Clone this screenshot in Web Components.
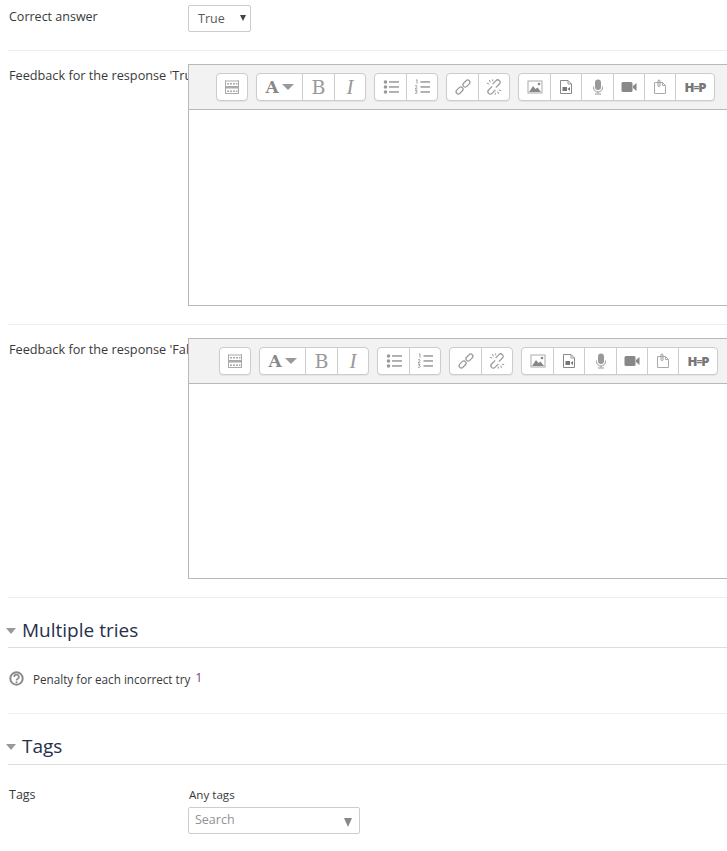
<!DOCTYPE html>
<html lang="en">
<head>
<meta charset="utf-8">
<title>Question form</title>
<style>
  html, body { margin: 0; padding: 0; background: #fff; overflow: hidden; }
  body { width: 727px; height: 851px; font: 12.5px/20px "Open Sans", sans-serif; color: #373a3c; }
</style>
</head>
<body>
<form-page>
  <form-row height="51" kind="short">
    <span slot="label">Correct answer</span>
    <true-select></true-select>
  </form-row>
  <form-row height="274">
    <span slot="label" style="font-size:12.7px">Feedback for the response 'True'</span>
    <atto-editor pad="27" box="242"></atto-editor>
  </form-row>
  <form-row height="273">
    <span slot="label" style="font-size:12.7px">Feedback for the response 'False'</span>
    <atto-editor pad="30" box="241"></atto-editor>
  </form-row>
  <section-head style="margin-top:20px;height:29px">Multiple tries</section-head>
  <penalty-row></penalty-row>
  <section-head style="margin-top:20px">Tags</section-head>
  <tag-row></tag-row>
</form-page>

<script>
class FormPage extends HTMLElement {
  constructor() {
    super();
    this.attachShadow({ mode: "open" });
  }
  connectedCallback() {
    this.shadowRoot.innerHTML = `
      <style>
        :host { display: block; padding-left: 8px; }
      </style>
      <slot></slot>
    `;
  }
}
customElements.define("form-page", FormPage);

class FormRow extends HTMLElement {
  constructor() {
    super();
    this.attachShadow({ mode: "open" });
  }
  connectedCallback() {
    const short = this.getAttribute("kind") === "short";
    this.shadowRoot.innerHTML = `
      <style>
        :host { display: block; }
        .row {
          display: flex;
          height: ${this.getAttribute("height")}px;
          box-sizing: border-box;
          border-bottom: 1px solid #eceeef;
          width: 719px;
        }
        .label {
          flex: 0 0 180px;
          padding-left: 1px;
          box-sizing: border-box;
          white-space: nowrap;
          overflow: hidden;
          height: 24px;
          margin-top: ${short ? 7 : 14}px;
        }
        .field { margin-top: ${short ? 5 : 13}px; flex: 1; min-width: 0; }
      </style>
      <div class="row">
        <div class="label"><slot name="label"></slot></div>
        <div class="field"><slot></slot></div>
      </div>
    `;
  }
}
customElements.define("form-row", FormRow);

class TrueSelect extends HTMLElement {
  constructor() {
    super();
    this.attachShadow({ mode: "open" });
  }
  connectedCallback() {
    this.shadowRoot.innerHTML = `
      <style>
        :host { display: block; width: 63px; height: 27px; }
        .box {
          position: relative;
          box-sizing: border-box;
          width: 63px;
          height: 27px;
          border: 1px solid #ccc;
          border-radius: 2px;
          padding: 3px 0 0 9px;
          color: #55595c;
        }
        .box::after {
          content: "";
          position: absolute;
          right: 4px;
          top: 9px;
          border-left: 3.5px solid transparent;
          border-right: 3.5px solid transparent;
          border-top: 6px solid #444;
        }
      </style>
      <div class="box">True</div>
    `;
  }
}
customElements.define("true-select", TrueSelect);

const ICONS = {
  table: `<g fill="#aaa"><rect x="1" y="1.5" width="14" height="1"/><rect x="1" y="7" width="14" height="2.5"/><rect x="1" y="14" width="14" height="1"/><rect x="1" y="1.5" width="1" height="13"/><rect x="14" y="1.5" width="1" height="13"/><rect x="3" y="4" width="2" height="1.5"/><rect x="6" y="4" width="2" height="1.5"/><rect x="9" y="4" width="2" height="1.5"/><rect x="12" y="4" width="1.5" height="1.5"/><rect x="3" y="11.5" width="2" height="1.5"/><rect x="6" y="11.5" width="2" height="1.5"/><rect x="9" y="11.5" width="2" height="1.5"/><rect x="12" y="11.5" width="1.5" height="1.5"/></g>`,
  ul: `<g fill="#999"><circle cx="2.5" cy="3" r="1.8"/><circle cx="2.5" cy="8" r="1.8"/><circle cx="2.5" cy="13" r="1.8"/><rect x="6" y="2.2" width="10" height="1.5"/><rect x="6" y="7.2" width="10" height="1.5"/><rect x="6" y="12.2" width="10" height="1.5"/></g>`,
  ol: `<g fill="#999"><rect x="6.5" y="2.2" width="9.5" height="1.5"/><rect x="6.5" y="7.2" width="9.5" height="1.5"/><rect x="6.5" y="12.2" width="9.5" height="1.5"/></g><g fill="none" stroke="#999" stroke-width=".9"><path d="M2 1.2l1-.5v4"/><path d="M1 6.8q2-1 2 .5 0 1-2 2.5h2.3"/><path d="M1 11.3h2l-1 1.3q1.5 0 1.3 1-.2 1.2-2.3.7"/></g>`,
  link: `<g fill="none" stroke="#999" stroke-width="1.2"><rect x="-4.6" y="-2.2" width="8" height="4.4" rx="2.2" transform="translate(5 11) rotate(-45)"/><rect x="-3.4" y="-2.2" width="8" height="4.4" rx="2.2" transform="translate(11 5) rotate(-45)"/></g>`,
  unlink: `<g fill="none" stroke="#999" stroke-width="1.2"><path d="M6.2 7.4L2.6 11a2.4 2.4 0 0 0 3.4 3.4l3.4-3.6"/><path d="M9.8 8.6l3.6-3.6A2.4 2.4 0 0 0 10 1.6L6.6 5.2"/><path d="M3.4 1l1 2.4M.8 4.2l2.4.8M6.6.4l.2 2M12.6 15l-1-2.4M15.2 11.8l-2.4-.8M9.4 15.6l-.2-2" stroke-width="1"/></g>`,
  image: `<rect x="1" y="2" width="14" height="12" fill="none" stroke="#aaa"/><path fill="#888" d="M2 13l4-6 2.5 3 2-1.5 3.5 4.5z"/><circle cx="12" cy="5" r="1.3" fill="#888"/>`,
  media: `<path fill="none" stroke="#888" d="M2.5 1.5h7.5l3.5 3.5v9.5h-11z"/><path fill="none" stroke="#999" d="M10 1.5V5h3.5"/><rect x="4.5" y="8" width="4.5" height="4" fill="#777"/><path fill="#777" d="M9.5 10l2.5-2v4z"/>`,
  mic: `<rect x="5" y="0.5" width="6" height="10.5" rx="3" fill="#999"/><path fill="none" stroke="#999" d="M3.5 7.5v1a4.5 4.5 0 0 0 9 0v-1M8 13v1.5M5 15h6"/>`,
  video: `<rect x="0.5" y="3" width="11" height="10" rx="1.5" fill="#888"/><path fill="#888" d="M12 7l3.5-3v8L12 9z"/>`,
  file: `<path fill="none" stroke="#aaa" d="M2.5 3.5h8l3 3v8h-11z"/><path fill="none" stroke="#aaa" d="M10.5 3.5v3h3"/><path fill="none" stroke="#999" d="M6 2v4.5a1 1 0 0 0 2 0V2a1 1 0 0 0-2 0z"/>`,
};

class AttoEditor extends HTMLElement {
  constructor() {
    super();
    this.attachShadow({ mode: "open" });
  }
  btn(name, width) {
    return `<span class="btn" style="width:${width}px"><svg width="16" height="16" viewBox="0 0 16 16">${ICONS[name]}</svg></span>`;
  }
  connectedCallback() {
    this.shadowRoot.innerHTML = `
      <style>
        :host { display: block; width: 600px; background: #fff; position: relative; }
        .wrap { border: 1px solid #b8b8b8; box-sizing: border-box; height: ${this.getAttribute("box")}px; }
        .toolbar {
          display: flex;
          gap: 8px;
          height: 45px;
          box-sizing: border-box;
          padding: 8px 0 0 ${this.getAttribute("pad")}px;
          background: #f2f2f2;
          border-bottom: 1px solid #b8b8b8;
        }
        .group {
          display: flex;
          height: 28px;
          box-sizing: border-box;
          background: #fff;
          border: 1px solid #ccc;
          border-radius: 4px;
          box-shadow: 0 1px 1px rgba(0,0,0,.06);
        }
        .btn {
          display: flex;
          align-items: center;
          justify-content: center;
          box-sizing: border-box;
          height: 26px;
          border-right: 1px solid #ccc;
          color: #999;
        }
        .btn:last-child { border-right: 0; }
        .serif { font: 19px/26px "DejaVu Serif", serif; }
        .font { font: bold 17px/26px "DejaVu Serif", serif; color: #888; gap: 3px; }
        .font i {
          width: 0;
          height: 0;
          border-left: 6px solid transparent;
          border-right: 6px solid transparent;
          border-top: 6px solid #999;
        }
        .ital { font: italic 21px/26px "Liberation Serif", serif; }
        .h5p {
          font: 800 13px/1 "Open Sans", sans-serif;
          color: #777;
          letter-spacing: -1px;
        }
        .h5p span { font-size: 10px; }
      </style>
      <div class="wrap">
        <div class="toolbar">
          <div class="group">${this.btn("table", 30)}</div>
          <div class="group">
            <span class="btn font" style="width:46px">A<i></i></span>
            <span class="btn serif" style="width:32px">B</span>
            <span class="btn ital" style="width:30px">I</span>
          </div>
          <div class="group">${this.btn("ul", 32)}${this.btn("ol", 30)}</div>
          <div class="group">${this.btn("link", 32)}${this.btn("unlink", 30)}</div>
          <div class="group">
            ${this.btn("image", 32)}${this.btn("media", 31)}${this.btn("mic", 32)}${this.btn("video", 31)}${this.btn("file", 31)}
            <span class="btn h5p" style="width:38px">H<span>=</span>P</span>
          </div>
        </div>
      </div>
    `;
  }
}
customElements.define("atto-editor", AttoEditor);

class SectionHead extends HTMLElement {
  constructor() {
    super();
    this.attachShadow({ mode: "open" });
  }
  connectedCallback() {
    this.shadowRoot.innerHTML = `
      <style>
        :host { display: block; width: 719px; height: 30px; }
        .head {
          display: flex;
          align-items: flex-start;
          height: 100%;
          border-bottom: 1px solid #ddd;
          font-size: 19px;
          line-height: 24px;
          color: #27304a;
        }
        .tri {
          width: 0;
          height: 0;
          margin: 10px 6px 0 -2px;
          border-left: 5px solid transparent;
          border-right: 5px solid transparent;
          border-top: 6px solid #999;
        }
      </style>
      <div class="head"><span class="tri"></span><slot></slot></div>
    `;
  }
}
customElements.define("section-head", SectionHead);

class PenaltyRow extends HTMLElement {
  constructor() {
    super();
    this.attachShadow({ mode: "open" });
  }
  connectedCallback() {
    this.shadowRoot.innerHTML = `
      <style>
        :host { display: block; width: 719px; }
        .row {
          display: flex;
          align-items: flex-start;
          height: 67px;
          box-sizing: border-box;
          padding-top: 22px;
          border-bottom: 1px solid #eceeef;
          font-size: 11.7px;
        }
        svg { margin: 2px 9px 0 1px; flex: none; }
        .val { margin-left: 5px; font-size: 12.5px; position: relative; top: -1px; color: #7a3e8a; }
      </style>
      <div class="row">
        <svg width="15" height="15" viewBox="0 0 15 15">
          <circle cx="7.5" cy="7.5" r="6.2" fill="none" stroke="#8a8a8a" stroke-width="2"/>
          <path d="M5.2 6a2.3 2.3 0 1 1 3.5 1.9c-.8.5-1.2.8-1.2 1.5" fill="none" stroke="#8a8a8a" stroke-width="1.7"/>
          <circle cx="7.5" cy="11.2" r="1" fill="#8a8a8a"/>
        </svg>
        <span>Penalty for each incorrect try</span><span class="val">1</span>
      </div>
    `;
  }
}
customElements.define("penalty-row", PenaltyRow);

class TagRow extends HTMLElement {
  constructor() {
    super();
    this.attachShadow({ mode: "open" });
  }
  connectedCallback() {
    this.shadowRoot.innerHTML = `
      <style>
        :host { display: block; padding-top: 21px; }
        .row { display: flex; }
        .label { width: 180px; padding-left: 1px; box-sizing: border-box; }
        .any { font-size: 11.6px; line-height: 20px; padding-left: 1px; }
        .search {
          position: relative;
          box-sizing: border-box;
          width: 172px;
          height: 27px;
          margin-top: 2px;
          border: 1px solid #ccc;
          border-radius: 2px;
          padding: 2px 0 0 6px;
          color: #8e9297;
        }
        .search::after {
          content: "";
          position: absolute;
          right: 7px;
          top: 10px;
          border-left: 4.5px solid transparent;
          border-right: 4.5px solid transparent;
          border-top: 9px solid #888;
        }
      </style>
      <div class="row">
        <div class="label">Tags</div>
        <div>
          <div class="any">Any tags</div>
          <div class="search">Search</div>
        </div>
      </div>
    `;
  }
}
customElements.define("tag-row", TagRow);
</script>
</body>
</html>
